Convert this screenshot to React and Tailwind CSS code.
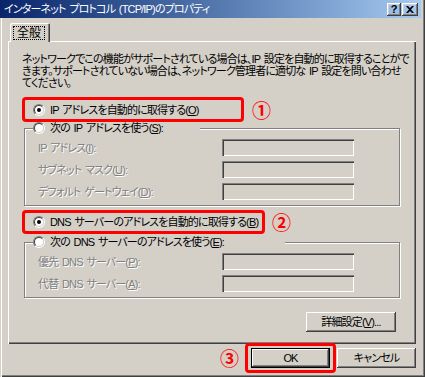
import React from "react";

const raised =
    "shadow-[inset_-1px_-1px_0_#404040,inset_1px_1px_0_#fff,inset_-2px_-2px_0_#808080,inset_2px_2px_0_#d4d0c8]";
const sunken =
    "shadow-[inset_1px_1px_0_#808080,inset_2px_2px_0_#404040,inset_-1px_-1px_0_#fff,inset_-2px_-2px_0_#d4d0c8]";
const disabled = "text-[#808080] [text-shadow:1px_1px_0_#fff]";

const Radio = ({ checked }) => (
    <span className="flex w-[12px] h-[12px] shrink-0 rounded-full border border-t-[#808080] border-l-[#808080] border-r-white border-b-white">
        <span className="flex flex-1 items-center justify-center rounded-full border border-t-[#404040] border-l-[#404040] border-r-[#d4d0c8] border-b-[#d4d0c8] bg-white">
            {checked && <span className="w-[4px] h-[4px] rounded-full bg-black" />}
        </span>
    </span>
);

const Key = ({ k }) => <span className="underline underline-offset-1">{k}</span>;

const Field = () => <div className={`w-[132px] h-[17px] ${sunken}`} />;

const FieldRow = ({ label, k, tail = "):" }) => (
    <div className="flex items-center h-[17px]">
        <span className={`w-[184px] whitespace-nowrap ${disabled}`}>
            {label}(<Key k={k} />{tail}
        </span>
        <Field />
    </div>
);

const Mark = ({ n }) => (
    <span className="text-[19px] leading-[20px] tracking-normal font-bold text-[#ff0000] font-['Noto_Sans_CJK_JP',sans-serif]">
        {n}
    </span>
);

export default function App() {
    return (
        <div className="w-[425px] h-[377px] flex flex-col bg-[#d4d0c8] text-[11px] leading-[12px] tracking-[-0.85px] [word-spacing:1.5px] text-black font-['Liberation_Sans','Noto_Sans_CJK_JP',sans-serif] [font-feature-settings:'palt'] shadow-[inset_1px_0_0_#d4d0c8,inset_2px_0_0_#fff,inset_-1px_-1px_0_#404040,inset_-2px_-2px_0_#808080] overflow-hidden">
            {/* title bar */}
            <div className="h-[18px] mr-[4px] flex items-center bg-gradient-to-r from-[#0a246a] to-[#a6caf0]">
                <span className="pl-[4px] text-white whitespace-nowrap">
                    インターネット プロトコル (TCP/IP)のプロパティ
                </span>
                <div className="ml-auto mr-[3px] flex gap-[1px] tracking-normal">
                    <div className={`w-[14px] h-[13px] flex items-center justify-center text-[11px] font-bold ${raised}`}>
                        ?
                    </div>
                    <div className={`w-[16px] h-[13px] flex items-center justify-center ${raised}`}>
                        <svg width="8" height="7" viewBox="0 0 8 7">
                            <path d="M0 0h2l2 2 2-2h2L5 3.5 8 7H6L4 5 2 7H0l3-3.5z" fill="#000" />
                        </svg>
                    </div>
                </div>
            </div>

            <div className="flex flex-col pl-[8px]">
                {/* tab */}
                <div className="mt-[5px] ml-[2px] w-[40px] h-[19px] -mb-[1px] relative z-10 bg-[#d4d0c8] rounded-t-[2px] shadow-[inset_1px_1px_0_#fff,inset_-1px_0_0_#404040,inset_-2px_0_0_#808080] flex items-start pt-[3px] pl-[3px]">
                    <span className="border border-dotted border-black px-[3px] h-[14px] leading-[12px] text-[12px] tracking-normal">全般</span>
                </div>

                {/* panel */}
                <div className="w-[408px] h-[303px] flex flex-col pt-[12px] pl-[14px] shadow-[inset_1px_1px_0_#fff,inset_-1px_-1px_0_#404040,inset_-2px_-2px_0_#808080]">
                    <p className="whitespace-nowrap">
                        ネットワークでこの機能がサポートされている場合は、IP 設定を自動的に取得することがで
                        <br />
                        きます。サポートされていない場合は、ネットワーク管理者に適切な IP 設定を問い合わせ
                        <br />
                        てください。
                    </p>

                    <div className="flex items-center mt-[8px]">
                        <div className="w-[222px] h-[25px] border-[3px] border-[#ff0000] rounded-[4px] flex items-center gap-[5px] pl-[8px]">
                            <Radio checked />
                            <span className="whitespace-nowrap">
                                IP アドレスを自動的に取得する(<Key k="O" />)
                            </span>
                        </div>
                        <span className="ml-[8px]">
                            <Mark n="①" />
                        </span>
                    </div>

                    <div className="ml-[2px] mt-[6px] w-[376px] border border-[#808080] shadow-[1px_1px_0_#fff,inset_1px_1px_0_#fff] pb-[5px]">
                        <div className="-mt-[7px] ml-[8px] w-[167px] h-[12px] bg-[#d4d0c8] flex items-center gap-[5px]">
                            <Radio />
                            <span className="whitespace-nowrap">
                                次の IP アドレスを使う(<Key k="S" />):
                            </span>
                        </div>
                        <div className="flex flex-col gap-[5px] mt-[5px] pl-[13px]">
                            <FieldRow label="IP アドレス" k="I" />
                            <FieldRow label="サブネット マスク" k="U" />
                            <FieldRow label="デフォルト ゲートウェイ" k="D" />
                        </div>
                    </div>

                    <div className="flex items-center mt-[4px]">
                        <div className="w-[243px] h-[24px] border-[3px] border-[#ff0000] rounded-[4px] flex items-center gap-[5px] pl-[8px]">
                            <Radio checked />
                            <span className="whitespace-nowrap">
                                DNS サーバーのアドレスを自動的に取得する(<Key k="B" />)
                            </span>
                        </div>
                        <span className="ml-[7px]">
                            <Mark n="②" />
                        </span>
                    </div>

                    <div className="ml-[2px] mt-[8px] w-[376px] border border-[#808080] shadow-[1px_1px_0_#fff,inset_1px_1px_0_#fff] pb-[5px]">
                        <div className="-mt-[7px] ml-[8px] w-[252px] h-[12px] bg-[#d4d0c8] flex items-center gap-[5px]">
                            <Radio />
                            <span className="whitespace-nowrap">
                                次の DNS サーバーのアドレスを使う(<Key k="E" />):
                            </span>
                        </div>
                        <div className="flex flex-col gap-[5px] mt-[5px] pl-[13px]">
                            <FieldRow label="優先 DNS サーバー" k="P" />
                            <FieldRow label="代替 DNS サーバー" k="A" />
                        </div>
                    </div>

                    <div className="w-[378px] flex justify-end pr-[4px] mt-[14px]">
                        <button className={`w-[90px] h-[20px] flex items-center justify-center ${raised}`}>
                            詳細設定(<Key k="V" />)...
                        </button>
                    </div>
                </div>

                {/* bottom buttons */}
                <div className="flex items-center justify-end pr-[9px] -mt-[1px]">
                    <Mark n="③" />
                    <div className="ml-[6px] w-[91px] h-[30px] border-[3px] border-[#ff0000] rounded-[4px] flex items-center justify-center">
                        <button className="w-[79px] h-[20px] border border-black flex">
                            <span className={`flex-1 flex items-center justify-center ${raised}`}>OK</span>
                        </button>
                    </div>
                    <button className={`ml-[1px] w-[79px] h-[20px] flex items-center justify-center ${raised}`}>
                        キャンセル
                    </button>
                </div>
            </div>
        </div>
    );
}
